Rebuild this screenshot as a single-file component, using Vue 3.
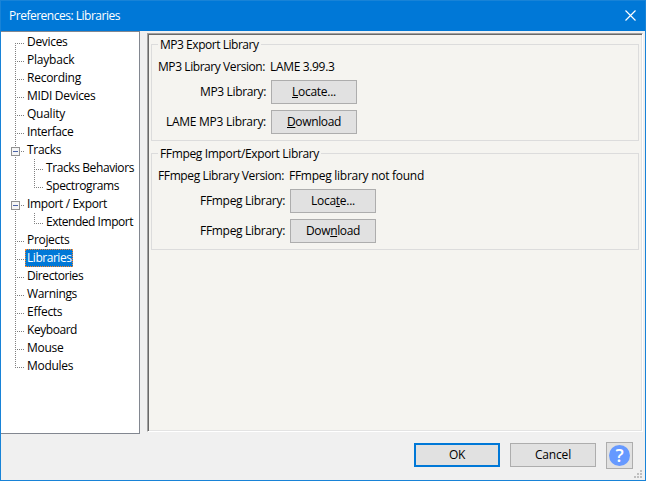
<script setup>
// Spreads a label's letters so that it takes a given width in pixels.
const vFit = {
  mounted(el, { value }) {
    const natural = el.getBoundingClientRect().width
    el.style.letterSpacing = (value - natural) / el.textContent.length + 'px'
  }
}

const tree = [
  { name: 'Devices', w: 40.5 },
  { name: 'Playback', w: 47.3 },
  { name: 'Recording', w: 54 },
  { name: 'MIDI Devices', w: 68.5 },
  { name: 'Quality', w: 38 },
  { name: 'Interface', w: 46.3 },
  { name: 'Tracks', w: 34.3 },
  { name: 'Tracks Behaviors', w: 88, child: true },
  { name: 'Spectrograms', w: 73, child: true, last: true },
  { name: 'Import / Export', w: 80, open: true },
  { name: 'Extended Import', w: 87, child: true, last: true },
  { name: 'Projects', w: 42.3 },
  { name: 'Libraries', w: 44.5, selected: true },
  { name: 'Directories', w: 56.2 },
  { name: 'Warnings', w: 50 },
  { name: 'Effects', w: 35.3 },
  { name: 'Keyboard', w: 50 },
  { name: 'Mouse', w: 36.5 },
  { name: 'Modules', w: 46.2, last: true }
]
tree[6].open = true

const groups = [
  {
    title: 'MP3 Export Library', tw: 98.5, cls: 'mp3',
    version: 'MP3 Library Version:', vw: 107, value: 'LAME 3.99.3', valw: 64.5,
    rows: [
      { label: 'MP3 Library:', w: 66, a: '', u: 'L', b: 'ocate...', bw: 44 },
      { label: 'LAME MP3 Library:', w: 100, a: '', u: 'D', b: 'ownload', bw: 54 }
    ]
  },
  {
    title: 'FFmpeg Import/Export Library', tw: 159, cls: 'ffmpeg',
    version: 'FFmpeg Library Version:', vw: 126, value: 'FFmpeg library not found', valw: 135,
    rows: [
      { label: 'FFmpeg Library:', w: 85, a: 'Loca', u: 't', b: 'e...', bw: 44 },
      { label: 'FFmpeg Library:', w: 85, a: 'Dow', u: 'n', b: 'load', bw: 54 }
    ]
  }
]
</script>

<template>
  <div class="window">
    <header class="titlebar">
      <span v-fit="111">Preferences: Libraries</span>
      <svg class="close" width="11" height="11" viewBox="0 0 11 11">
        <path d="M.5 .5L10.5 10.5M10.5 .5L.5 10.5" stroke="#fff" stroke-width="1.15" />
      </svg>
    </header>
    <main class="content">
      <nav class="tree">
        <div v-for="n in tree" :key="n.name" class="node" :class="{ child: n.child }">
          <svg class="lines" :width="n.child ? 44 : 25" height="18" shape-rendering="crispEdges">
            <g fill="none" stroke="#808080" stroke-dasharray="1 1">
              <path v-if="n.child" d="M14.5 0V18" />
              <path v-if="n.child" :d="n.last ? 'M33.5 0V10' : 'M33.5 0V18'" />
              <path v-if="n.child" d="M33 10.5H43" />
              <path v-if="!n.child" :d="n.last ? 'M14.5 0V10' : 'M14.5 0V18'" />
              <path v-if="!n.child" d="M14 10.5H24" />
            </g>
            <g v-if="n.open">
              <rect x="10.5" y="6.5" width="8" height="8" rx="1" fill="#f5f5f5" stroke="#919191" />
              <path d="M12 10.5H17" stroke="#4b63a7" />
            </g>
          </svg>
          <span class="name" :class="{ selected: n.selected }"><span v-fit="n.w">{{ n.name }}</span></span>
        </div>
      </nav>
      <section class="panel">
        <fieldset v-for="g in groups" :key="g.title" class="group" :class="g.cls">
          <legend><span v-fit="g.tw">{{ g.title }}</span></legend>
          <div class="row version">
            <span class="label"><span v-fit="g.vw">{{ g.version }}</span></span>
            <span v-fit="g.valw">{{ g.value }}</span>
          </div>
          <div v-for="(r, i) in g.rows" :key="i" class="row">
            <span class="label"><span v-fit="r.w">{{ r.label }}</span></span>
            <button class="btn"><span v-fit="r.bw">{{ r.a }}<u>{{ r.u }}</u>{{ r.b }}</span></button>
          </div>
        </fieldset>
      </section>
    </main>
    <footer class="footer">
      <button class="btn ok"><span v-fit="16">OK</span></button>
      <button class="btn cancel"><span v-fit="36">Cancel</span></button>
      <button class="btn help"><span class="disc">?</span></button>
    </footer>
    <svg class="grip" width="8" height="8" fill="#bfbfbf" shape-rendering="crispEdges">
      <path d="M6 0h2v2h-2zM3 3h2v2h-2zM6 3h2v2h-2zM0 6h2v2h-2zM3 6h2v2h-2zM6 6h2v2h-2z" />
    </svg>
  </div>
</template>

<style>
body { margin: 0; overflow: hidden; }
</style>

<style scoped>
.window {
  position: relative;
  box-sizing: border-box;
  width: 646px;
  height: 481px;
  border: 1px solid #1883d7;
  background: #f0f0f0;
  color: #000;
  font: 12px/18px "Open Sans", "Noto Sans", sans-serif;
  white-space: nowrap;
  display: flex;
  flex-direction: column;
}
.titlebar {
  height: 30px;
  box-sizing: border-box;
  padding: 0 9px 1px 8px;
  background: #0078d7;
  color: #fff;
  display: flex;
  align-items: center;
  justify-content: space-between;
}
.content { display: flex; height: 403px; }
.tree {
  box-sizing: border-box;
  width: 139px;
  height: 403px;
  padding-top: 1px;
  background: #fff;
  border: solid #828790;
  border-width: 1px 1px 1px 0;
}
.node { display: flex; height: 18px; }
.lines { display: block; flex: none; }
.node:first-child .lines { clip-path: inset(10px 0 0 0); }
.node:not(.child) .lines { margin-right: -1px; }
.name {
  box-sizing: border-box;
  height: 18px;
  padding: 0 1px 0 2px;
  line-height: 18px;
}
.child .name { padding-left: 1px; }
.selected {
  color: #fff;
  background: #0078d7;
  outline: 1px dotted #ff8728;
  outline-offset: -1px;
  width: 48px;
}
.panel {
  box-sizing: border-box;
  width: 496px;
  height: 399px;
  margin: 2px 0 0 7px;
  padding: 2px 2px 0;
  background: #f5f4f0;
  border: 1px solid;
  border-color: #a0a0a0 #fff #fff #a0a0a0;
  box-shadow: inset 1px 1px #696969, inset -1px -1px #e3e3e3;
}
.group {
  box-sizing: border-box;
  width: 488px;
  height: 105px;
  margin: 0 0 4px 1px;
  padding: 0 0 0 6px;
  border: 1px solid #dcdcdc;
  min-width: 0;
}
legend { padding: 0 2px; height: 16px; line-height: 18px; }
.row { display: flex; align-items: center; height: 24px; margin-bottom: 6px; }
.version { height: 18px; margin: 6px 0 4px; }
.label { width: 108px; margin-right: 5px; display: flex; justify-content: flex-end; }
.ffmpeg .label { width: 127px; }
.version .label { width: 107px; }
.ffmpeg .version .label { width: 126px; }
.btn {
  box-sizing: border-box;
  width: 86px;
  height: 24px;
  margin: 0;
  padding: 0;
  border: 1px solid #adadad;
  background: #e1e1e1;
  color: #000;
  font: inherit;
  line-height: 20px;
  display: flex;
  align-items: center;
  justify-content: center;
}
u { text-underline-offset: 1px; text-decoration-skip-ink: none; }
.footer {
  display: flex;
  align-items: flex-start;
  justify-content: flex-end;
  gap: 10px;
  height: 27px;
  margin: 8px 12px 0 0;
}
.ok, .cancel { margin-top: 1px; }
.ok { border: 2px solid #0078d7; }
.help { width: 27px; height: 27px; }
.disc {
  width: 21px;
  height: 21px;
  border-radius: 50%;
  background: #69f;
  color: #fff;
  font: 600 18px/21px "Open Sans", sans-serif;
  text-align: center;
}
.grip { position: absolute; right: 3px; bottom: 2px; }
</style>
